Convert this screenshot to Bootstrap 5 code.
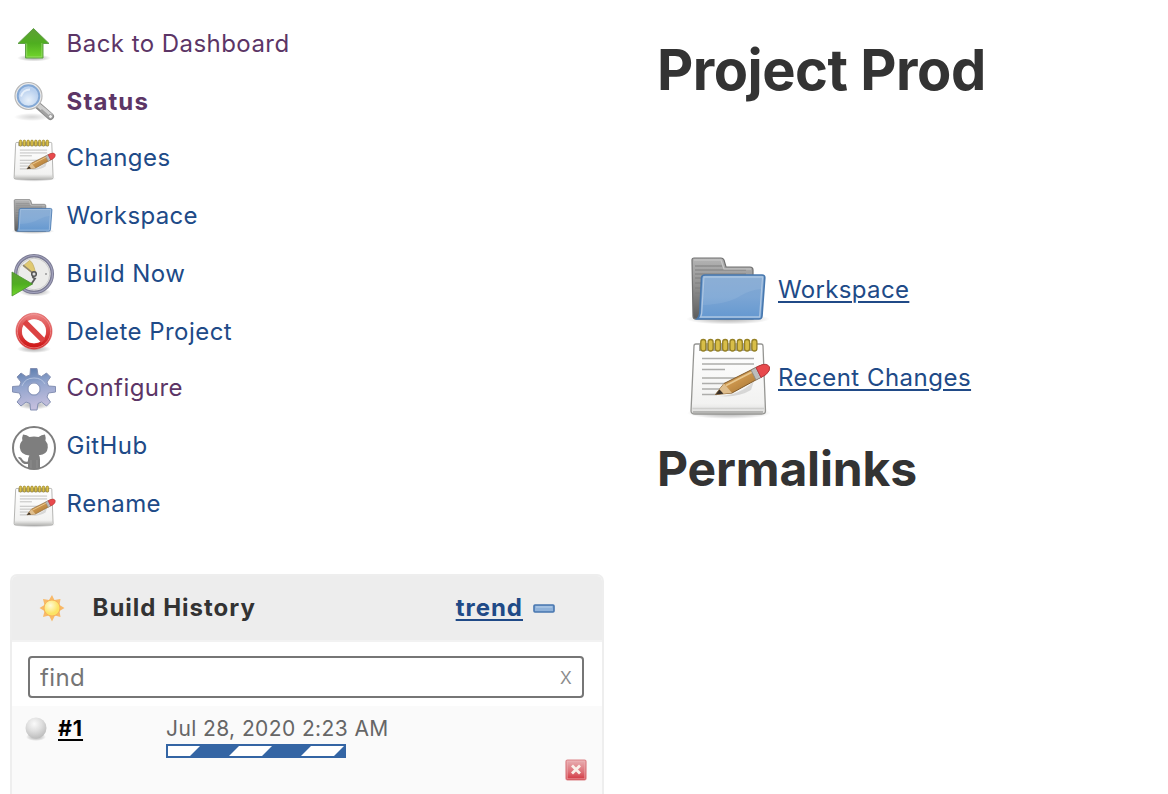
<!DOCTYPE html>
<html lang="en">
<head>
<meta charset="utf-8">
<meta name="viewport" content="width=device-width, initial-scale=1">
<title>Project Prod</title>
<link href="https://cdn.jsdelivr.net/npm/bootstrap@5.3.0/dist/css/bootstrap.min.css" rel="stylesheet">
<style>
body{font-family:Inter,"Liberation Sans",sans-serif;color:#333;background:#fff;height:794px;overflow:hidden;font-size:24px;line-height:30px}
a{color:#204a87}
.sidebar{width:594px;margin-left:10px;padding-top:24px}
.task{height:58px;padding-left:2px;gap:10.600px;text-decoration:none;letter-spacing:.45px}
.task.short{height:56px}
.task.fw-bold{letter-spacing:1.1px}
.task svg{width:44px;height:44px;overflow:visible}
.task span{margin-top:5px}
.task.seen{color:#5c3566}
.tasks{height:550px}
.history{border:2px solid #eee;border-bottom:0;border-radius:7px 7px 0 0;height:222px;background:#fff}
.history-head{height:66px;background:#ededed;border-bottom:2px solid #f2f2f2;padding:0 47px 0 26px;border-radius:5px 5px 0 0}
.head-title{margin-left:26.500px;letter-spacing:1px}
.trend{letter-spacing:1px;margin-right:10px}
.find-box{margin:14px 18px 8px 16px;height:42px;border:2px solid #767676;border-radius:4px;padding:0 10px}
.find-box input{border:0;outline:0;padding:0;width:300px;color:#757575;background:none;letter-spacing:.4px;height:38px}
.find-box input::placeholder{color:#757575;opacity:1}
.find-clear{color:#8c8c8c;font-size:23px;margin-top:-3px;font-weight:300}
.build{background:#fafafa;height:90px;padding:8px 15px 0 12px}
.build-id{color:#000;font-size:21.500px;line-height:29px;width:108px;margin-left:10px;letter-spacing:.9px}
.build-date{color:#666;font-size:21px;letter-spacing:.4px;white-space:nowrap}
.build-bar{width:180px;height:14px;border:2px solid #3465a4;background:repeating-linear-gradient(135deg,#fff 0 22.3px,#3465a4 23px 49.9px,#fff 50.5px 50.9px) padding-box}
.stop-row{padding-top:1px}
.main{margin-left:53px;padding-top:38px}
.main h1{font-size:56px;line-height:64px;font-weight:700;margin:0 0 143px;letter-spacing:-.5px}
.main h2{font-size:48px;line-height:60px;font-weight:700;margin:18px 0 0;letter-spacing:-.15px}
.shortcut{height:88px;margin-left:29px;gap:4px}
.shortcut svg{width:88px;height:88px}
.shortcut a{letter-spacing:.48px;padding-top:2px}
.shortcut .wide-name,.task .wide-name{letter-spacing:.35px}
.main a,.trend,.build-id a{text-decoration-thickness:2px;text-underline-offset:3px}
</style>
<script src="https://cdn.jsdelivr.net/npm/bootstrap@5.3.0/dist/js/bootstrap.bundle.min.js"></script>
</head>
<body>
<svg width="0" height="0" class="position-absolute" aria-hidden="true">
<defs>
<linearGradient id="gGreen" x2="0" y2="1"><stop stop-color="#5f9e35"/><stop offset=".5" stop-color="#4fae20"/><stop offset="1" stop-color="#72d62c"/></linearGradient>
<linearGradient id="gBlue" x2="0" y2="1"><stop stop-color="#83a9d2"/><stop offset=".5" stop-color="#7ba5d4"/><stop offset="1" stop-color="#6498d0"/></linearGradient>
<linearGradient id="gGrey" x2="0" y2="1"><stop stop-color="#b4b4b4"/><stop offset=".5" stop-color="#8d8d8d"/><stop offset="1" stop-color="#5c5c5c"/></linearGradient>
<linearGradient id="gPaper" x2="0" y2="1"><stop stop-color="#fff"/><stop offset=".85" stop-color="#f2f2f1"/><stop offset="1" stop-color="#dcdcda"/></linearGradient>
<linearGradient id="gRed" x2="0" y2="1"><stop stop-color="#eb8585"/><stop offset=".45" stop-color="#de4b4b"/><stop offset="1" stop-color="#cc1010"/></linearGradient>
<linearGradient id="gGear" x2=".2" y2="1"><stop stop-color="#5577a8"/><stop offset=".45" stop-color="#91a4cd"/><stop offset="1" stop-color="#c3bedd"/></linearGradient>
<linearGradient id="gPencil" x2="1" y2="1"><stop stop-color="#dcae6a"/><stop offset=".5" stop-color="#c8924a"/><stop offset="1" stop-color="#8f6426"/></linearGradient>
<linearGradient id="gStop" x2="0" y2="1"><stop stop-color="#e8b0b3"/><stop offset=".6" stop-color="#dd6f76"/><stop offset="1" stop-color="#d2323c"/></linearGradient>
<radialGradient id="gShade"><stop stop-color="#000" stop-opacity=".32"/><stop offset=".6" stop-color="#000" stop-opacity=".15"/><stop offset="1" stop-color="#000" stop-opacity="0"/></radialGradient>
<radialGradient id="gSun" cx=".4" cy=".35"><stop stop-color="#fffbd8"/><stop offset="1" stop-color="#fce364"/></radialGradient>
<radialGradient id="gBall" cx=".42" cy=".3" r=".7"><stop stop-color="#fafafa"/><stop offset=".5" stop-color="#dfdfdf"/><stop offset="1" stop-color="#bdbdbd"/></radialGradient>
<radialGradient id="gLens" cx=".5" cy=".7"><stop stop-color="#e8f1fb"/><stop offset="1" stop-color="#b9d0ee"/></radialGradient>
</defs>
<symbol id="folder" overflow="visible">
<ellipse cx="42" cy="74" rx="42" ry="5.500" fill="url(#gShade)"/>
<path d="M6 15q0-2 2-2H35q2 0 3 2l2 7H64q3 0 3 3V74H10q-3 0-3-3Z" fill="url(#gGrey)" stroke="#707070" stroke-width="1.200"/>
<path d="M9 21H36M9 25H60M9 29H60M9 33H20M9 38H16M9 43H15M9 48H15M9 53H15" stroke="#7e7e7e" stroke-width="1"/>
<path d="M8 15H35l3 9H65" fill="none" stroke="#c9c9c9" stroke-width="1.200"/>
<path d="M15.500 33q.2-3 3.500-3H76q3 0 2.800 3L76 71q-.3 3-3 3H11q2.500-2 2.800-6Z" fill="url(#gBlue)" stroke="#4878ae" stroke-width="1.600"/>
<path d="M18 32H76.500L73.700 72H14.500q1-1.500 1.200-4Z" fill="none" stroke="#adc6e2" stroke-width="1.300"/>
<path d="M17 60Q42 59 54 51Q64 45 75 44V33H19Z" fill="#fff" opacity=".08"/>
</symbol>
<symbol id="notepad" overflow="visible">
<ellipse cx="43" cy="80" rx="42" ry="6" fill="url(#gShade)"/>
<path d="M10 11H75q2 0 2 2l2.500 65q0 3-4 3H9q-4 0-4-3L8 13q0-2 2-2Z" fill="url(#gPaper)" stroke="#959592" stroke-width="1.300"/>
<path d="M6.500 75.500H78" stroke="#d0d0ce" stroke-width="1.500"/>
<path d="M7 79H77" stroke="#b5b5b3" stroke-width="2"/>
<path d="M13 11H71V18H13Z" fill="#a7a7a3"/>
<g fill="#d8be48" stroke="#958025" stroke-width="1.300"><rect x="14.800" y="6.500" width="5" height="11.500" rx="2.500"/><rect x="22.100" y="6.500" width="5" height="11.500" rx="2.500"/><rect x="29.400" y="6.500" width="5" height="11.500" rx="2.500"/><rect x="36.700" y="6.500" width="5" height="11.500" rx="2.500"/><rect x="44" y="6.500" width="5" height="11.500" rx="2.500"/><rect x="51.300" y="6.500" width="5" height="11.500" rx="2.500"/><rect x="58.600" y="6.500" width="5" height="11.500" rx="2.500"/><rect x="65.900" y="6.500" width="5" height="11.500" rx="2.500"/></g>
<path d="M16 25.500H68M16 31H68M16 36.500H39M16 45H58M16 50.500H51M16 56H42M16 61.500H31" stroke="#adadab" stroke-width="1.400"/>
<path d="M32 63Q53 63 68 48L65 57Q52 65 32 63Z" fill="#000" opacity=".12"/>
<path d="M29.500 61.500 38 50.500 72 33.500q8-4 11 1 1 4-5 8L46 60Z" fill="url(#gPencil)" stroke="#805a2a" stroke-width="1"/>
<path d="M38 50.500 46 60 29.500 61.500Z" fill="#dfbe8d"/><path d="M29.500 61.500 33.500 56.500 37.500 60.800Z" fill="#3a3027"/>
<path d="M40 52.500 70 37" stroke="#e9c88f" stroke-width="1.800"/>
<path d="M65 37 70 34.500 75 44.500 70 47Z" fill="#bcbcbc" stroke="#858585" stroke-width=".8"/>
<path d="M70 34.500 74 32.500q7-3 9.500 1.500.8 4-3.500 7.500L75 44.500Z" fill="#e84a4d" stroke="#b8393f" stroke-width="1"/>
</symbol>
</svg>

<div class="d-flex">
<aside class="sidebar flex-shrink-0">
<nav class="tasks d-flex flex-column">
<a href="#" class="task seen d-flex align-items-start"><svg viewBox="0 0 44 44"><ellipse cx="22" cy="34" rx="17" ry="3.500" fill="url(#gShade)"/><path d="M21.500 4.500 37 19.500H31V34H13.500V19.500H6Z" fill="url(#gGreen)" stroke="#61a048" stroke-width="1" stroke-linejoin="round"/><path d="M14.700 19.500V32.900H29.800V19" fill="none" stroke="#a0df75" stroke-width=".7"/></svg><span>Back to Dashboard</span></a>
<a href="#" class="task seen short d-flex align-items-start fw-bold"><svg viewBox="0 0 44 44"><ellipse cx="20" cy="35" rx="18" ry="4" fill="url(#gShade)" opacity=".5"/><path d="M26 23.500 38.500 34.500" stroke="#8a8a8a" stroke-width="7" stroke-linecap="round"/><path d="M26 23 38.500 33.500" stroke="#cecece" stroke-width="4.500" stroke-linecap="round"/><path d="M29 28 36.500 34.500" stroke="#a2a2a2" stroke-width="2.500"/><circle cx="38.500" cy="34.500" r="2" fill="#eee" stroke="#999"/><circle cx="16.500" cy="14" r="13.500" fill="#ebebeb" stroke="#b8b8b8" stroke-width="1.200"/><circle cx="16.500" cy="14" r="10.800" fill="url(#gLens)" stroke="#83a8d5" stroke-width="2"/><path d="M9 14.500q2-7 9-7" stroke="#f7fbff" stroke-width="2" fill="none" opacity=".7"/></svg><span>Status</span></a>
<a href="#" class="task d-flex align-items-start"><svg viewBox="1 2.500 84 84"><use href="#notepad"/></svg><span>Changes</span></a>
<a href="#" class="task d-flex align-items-start"><svg viewBox="1.700 6 85 85"><use href="#folder"/></svg><span class="wide-name">Workspace</span></a>
<a href="#" class="task d-flex align-items-start"><svg viewBox="0 0 44 44"><ellipse cx="23" cy="38" rx="16" ry="4.500" fill="url(#gShade)"/><circle cx="22" cy="20" r="18.300" fill="#ececea" stroke="#7c7c94" stroke-width="3.500"/><circle cx="22" cy="20" r="18.500" fill="none" stroke="#a2a2bd" stroke-width="1.200"/><circle cx="22" cy="20" r="15.800" fill="none" stroke="#ccc"/><path d="M11 12 17.500 6.500q3.500 1 6 12L20 19Z" fill="#e0c970" stroke="#c2ad68" stroke-width=".8"/><path d="M11 11 22 20" stroke="#8c8474" stroke-width="1.500"/><path d="M22 20.500q-3 3 1 4l-4 6" fill="none" stroke="#5b5b5b" stroke-width="1.800"/><circle cx="22" cy="20" r="2.300" fill="#ddd" stroke="#555" stroke-width="1.500"/><circle cx="34" cy="20" r="1" fill="#999"/><path d="M0 18 20.500 30 0 42Z" fill="url(#gGreen)" stroke="#4b9330" stroke-width=".8"/></svg><span>Build Now</span></a>
<a href="#" class="task short d-flex align-items-start"><svg viewBox="0 0 44 44"><ellipse cx="22" cy="37" rx="17" ry="4" fill="url(#gShade)"/><path fill-rule="evenodd" d="M22 1.200a18 18 0 1 0 .01 0ZM22 7.200a12 12 0 1 1-.01 0Z" fill="url(#gRed)" stroke="#dc6060" stroke-width=".7"/><circle cx="22" cy="19.200" r="12" fill="#fff"/><path d="M12.500 9.700 31.500 28.700" stroke="#dc4343" stroke-width="5.500"/><circle cx="22" cy="19.200" r="16.700" fill="none" stroke="#f29b9b" stroke-width=".7"/></svg><span>Delete Project</span></a>
<a href="#" class="task seen d-flex align-items-start"><svg viewBox="0 0 44 44"><ellipse cx="22" cy="37" rx="17" ry="4.500" fill="url(#gShade)"/><path fill-rule="evenodd" d="M18.500 .5H25L26 7 29.500 8.500 34.500 5 38.500 9 35 14 36.500 18 43.500 18.500V24L36.500 25 35 29 38.500 34 34.500 38 29.500 34 26 35.500 25 42H18.500L18 35.500 14 34 9 38 5 34 9 29 7.500 25 .5 24V18.500L7.500 18 9 14 5 9 9 5 14 8.500 18 7ZM22 15A6 6 0 1 0 22.010 15Z" fill="url(#gGear)" stroke="#8490b3" stroke-width="1" stroke-linejoin="round"/><path d="M10 18q3-8 12-8 8 0 11 6" fill="none" stroke="#c6d1e8" stroke-width="1" opacity=".7"/><circle cx="22" cy="21" r="6.500" fill="none" stroke="#94a2c8" stroke-width="1"/></svg><span>Configure</span></a>
<a href="#" class="task d-flex align-items-start"><svg viewBox="0 0 44 44"><circle cx="22" cy="22" r="21" fill="#fff" stroke="#7e7e7e" stroke-width="2"/><path d="M11 8.500q4 .2 6.500 2.500 4.500-1 9 0 3-2.500 6.500-2.500 1 3 .4 6 2.800 3 2.400 7-.4 7-9 7.700 1.200 1 1.200 4V43q-6 1-12 0V38q-5.500.6-7-3-.8-1.800-2.500-2.700-1-1.300.8-1.300 2 .2 3.500 3 2 2.500 5 1.400.1-3.600 1.600-5.900-8.800-.5-9.600-8-.2-4.500 2.600-7-.6-3 .6-6Z" fill="#7e7e7e"/><path d="M19 34V42M25 34V42" stroke="#939393" stroke-width=".8"/></svg><span>GitHub</span></a>
<a href="#" class="task d-flex align-items-start"><svg viewBox="1 2.500 84 84"><use href="#notepad"/></svg><span>Rename</span></a>
</nav>

<section class="history">
<div class="history-head d-flex align-items-center fw-bold">
<svg width="28" height="28" viewBox="0 0 28 28"><path d="M14 1 16.400 6 22.500 5 21.500 11 26.500 14 21.500 17 22.500 23 17 21.500 14 27.500 11 21.500 5 23 6.500 17 1.500 14 6.500 11 5 5 11 6Z" fill="#f8b968"/><circle cx="14" cy="14" r="8" fill="url(#gSun)" stroke="#f7b25c" stroke-width="1"/></svg>
<span class="head-title">Build History</span>
<a href="#" class="trend ms-auto">trend</a>
<svg class="collapse-mark" width="22" height="10" viewBox="0 0 22 10"><rect x="1" y="2" width="20" height="7" rx="1" fill="#8fb2da" stroke="#4776af" stroke-width="1.600"/><path d="M3 4H19" stroke="#b8d0ea"/></svg>
</div>
<div class="find-box d-flex align-items-center justify-content-between"><input type="text" placeholder="find" aria-label="find"><span class="find-clear">x</span></div>
<div class="build">
<div class="d-flex align-items-start">
<svg width="24" height="28" viewBox="0 0 24 28"><ellipse cx="12" cy="23" rx="10" ry="4" fill="url(#gShade)"/><circle cx="12" cy="14" r="10.500" fill="url(#gBall)"/></svg>
<div class="build-id fw-bold"><a href="#" class="text-black">#1</a></div>
<div><div class="build-date">Jul 28, 2020 2:23 AM</div><div class="build-bar"></div></div>
</div>
<div class="stop-row d-flex justify-content-end"><svg width="22" height="22" viewBox="0 0 22 22"><rect x="1" y="1" width="20" height="20" rx="1.500" fill="url(#gStop)" stroke="#dc8388" stroke-width="1.200"/><rect x="2.300" y="2.300" width="17.400" height="17.400" fill="none" stroke="#eeb3b7" stroke-width=".7" opacity=".7"/><path d="M7 6.500 15 14.500M15 6.500 7 14.500" stroke="#faf0ea" stroke-width="2.800"/></svg></div>
</div>
</section>
</aside>

<main class="main">
<h1>Project Prod</h1>
<div class="shortcut d-flex align-items-center"><svg viewBox="0 0 88 88"><use href="#folder"/></svg><a href="#" class="wide-name">Workspace</a></div>
<div class="shortcut d-flex align-items-center"><svg viewBox="0 0 88 88"><use href="#notepad"/></svg><a href="#">Recent Changes</a></div>
<h2>Permalinks</h2>
</main>
</div>
</body>
</html>
